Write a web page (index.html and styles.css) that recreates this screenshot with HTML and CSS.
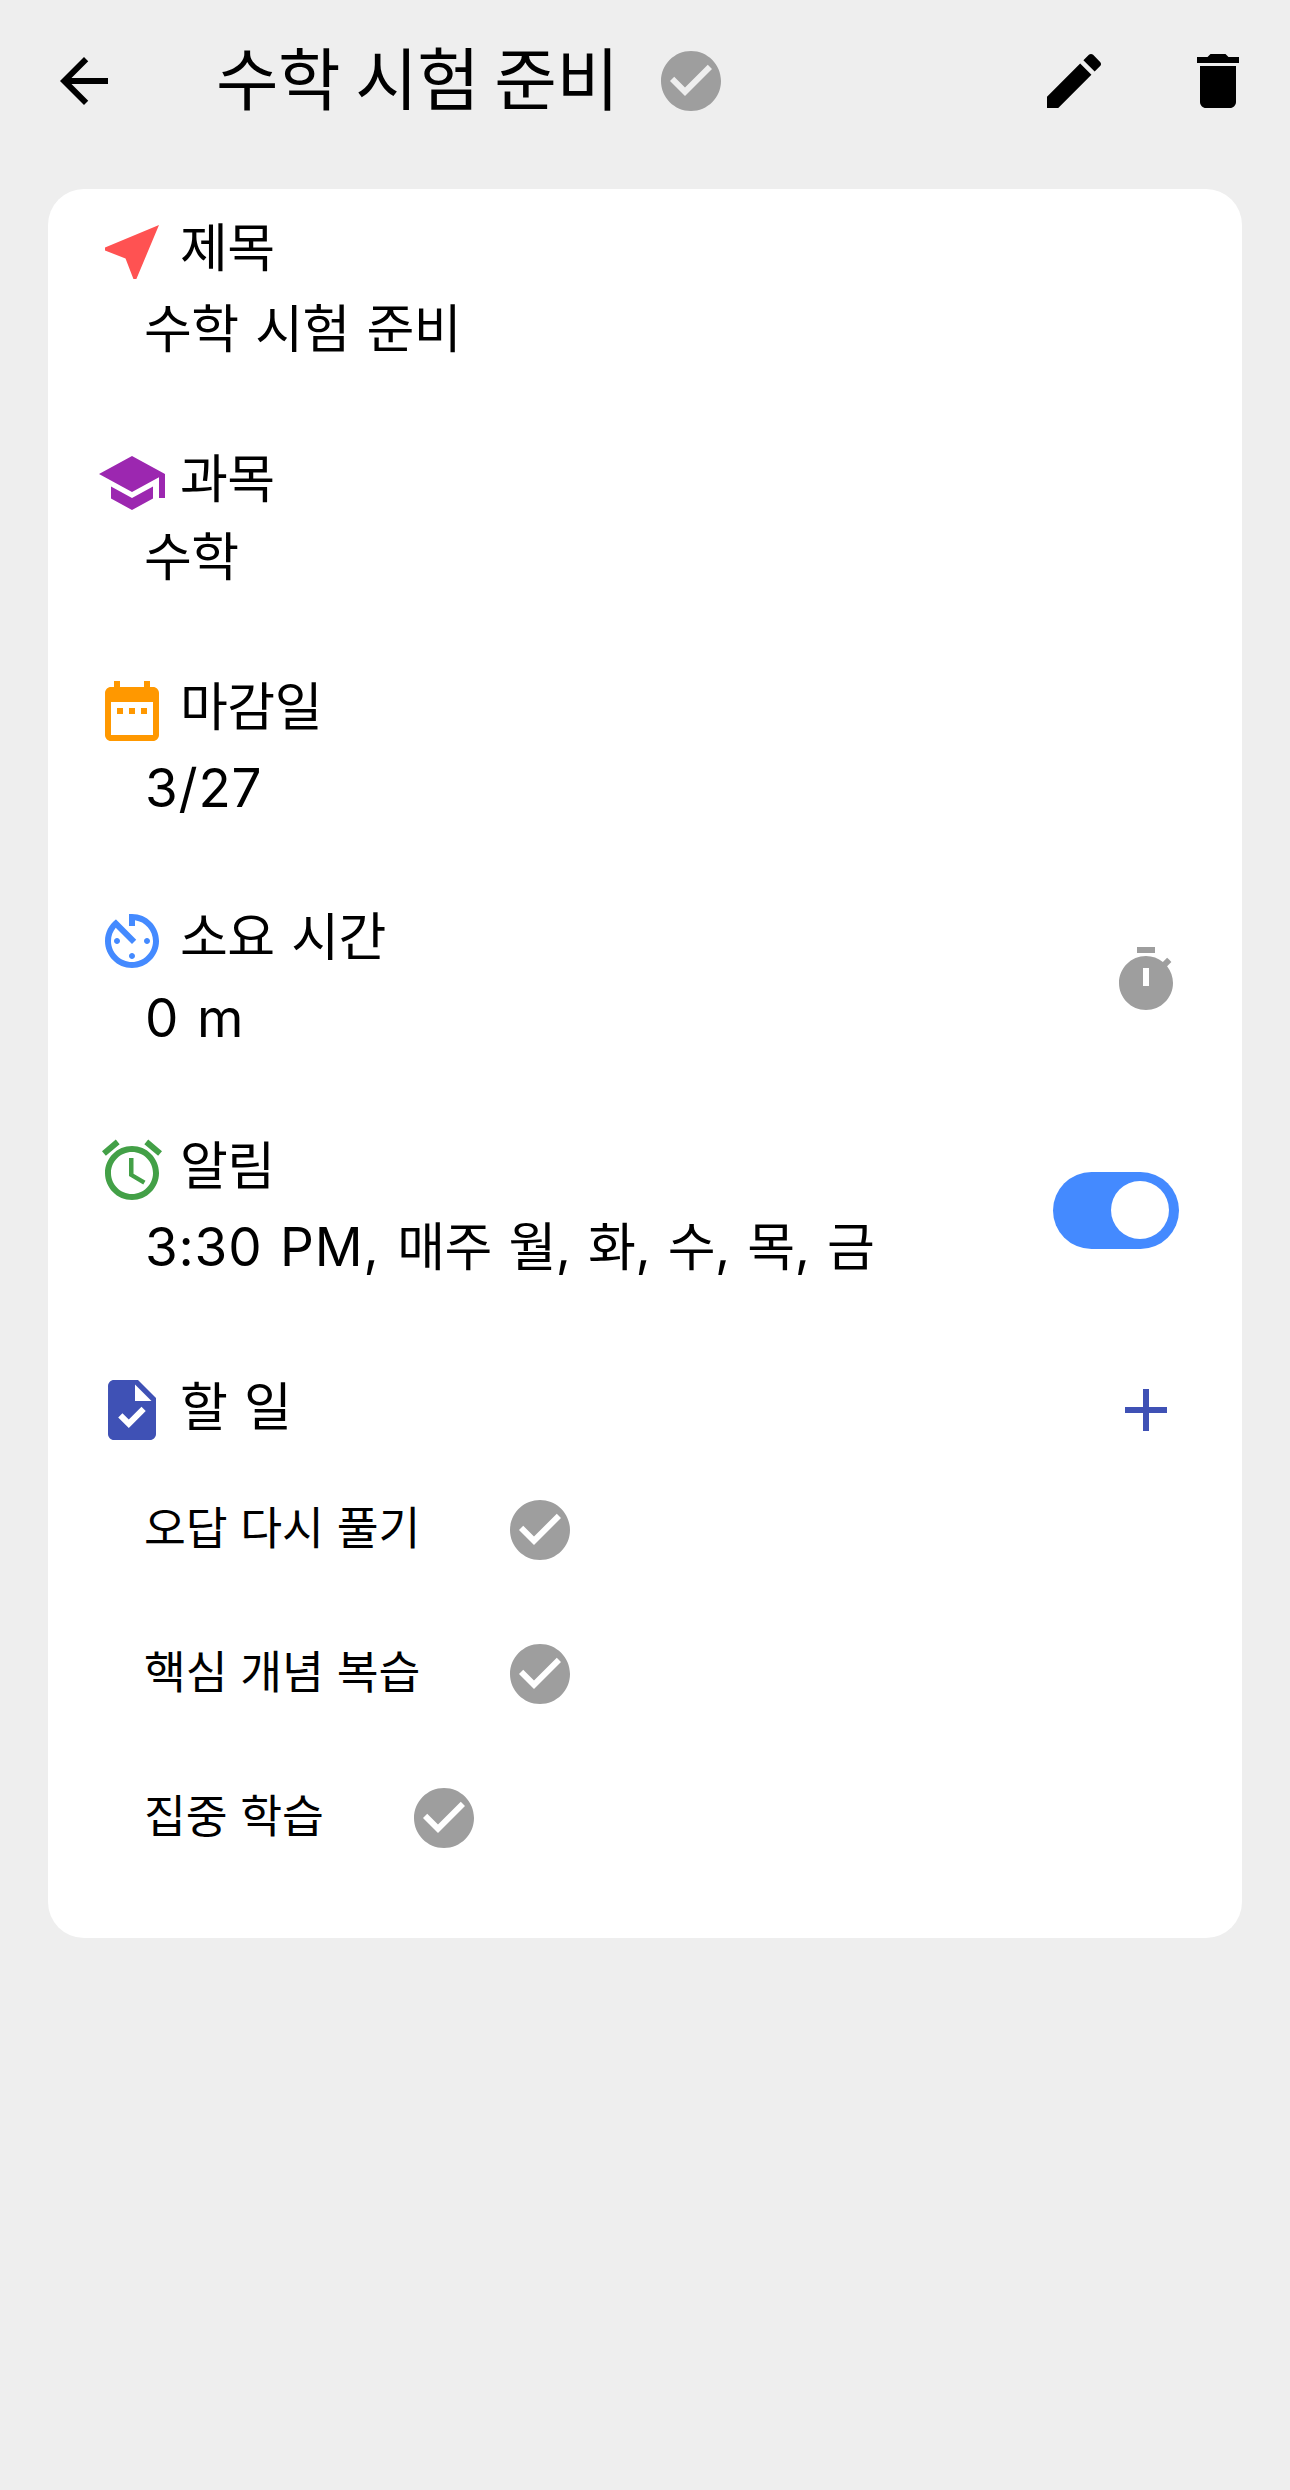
FILE: index.html
```html
<!DOCTYPE html>
<html lang="ko">
<head>
<meta charset="utf-8">
<title>수학 시험 준비</title>
<link rel="stylesheet" href="styles.css">
</head>
<body>
<header class="app-bar">
  <svg class="icon" viewBox="0 0 24 24"><path d="M20 11H7.83l5.59-5.59L12 4l-8 8 8 8 1.41-1.41L7.83 13H20v-2z"/></svg>
  <h1 class="app-title">수학 시험 준비</h1>
  <svg class="icon icon-grey" viewBox="0 0 24 24"><path d="M12 2C6.48 2 2 6.48 2 12s4.48 10 10 10 10-4.48 10-10S17.52 2 12 2zm-2 15l-5-5 1.41-1.41L10 14.17l7.59-7.59L19 8l-9 9z"/></svg>
  <div class="actions">
    <svg class="icon" viewBox="0 0 24 24"><path d="M3 17.25V21h3.75L17.81 9.94l-3.75-3.75L3 17.25zM20.71 7.04c.39-.39.39-1.02 0-1.41l-2.34-2.34c-.39-.39-1.02-.39-1.41 0l-1.83 1.83 3.75 3.75 1.83-1.83z"/></svg>
    <svg class="icon" viewBox="0 0 24 24"><path d="M6 19c0 1.1.9 2 2 2h8c1.1 0 2-.9 2-2V7H6v12zM19 4h-3.5l-1-1h-5l-1 1H5v2h14V4z"/></svg>
  </div>
</header>
<main class="card">
  <section class="field field-title">
    <div class="field-text">
      <div class="label"><svg class="icon icon-red" viewBox="0 0 24 24"><path d="M21 3L3 10.53v.98l6.84 2.65L12.48 21h.98L21 3z"/></svg><span>제목</span></div>
      <div class="value">수학 시험 준비</div>
    </div>
  </section>
  <section class="field field-subject">
    <div class="field-text">
      <div class="label"><svg class="icon icon-purple" viewBox="0 0 24 24"><path d="M5 13.18v4L12 21l7-3.82v-4L12 17l-7-3.82zM12 3L1 9l11 6 9-4.91V17h2V9L12 3z"/></svg><span>과목</span></div>
      <div class="value">수학</div>
    </div>
  </section>
  <section class="field">
    <div class="field-text">
      <div class="label"><svg class="icon icon-orange" viewBox="0 0 24 24"><path d="M9 11H7v2h2v-2zm4 0h-2v2h2v-2zm4 0h-2v2h2v-2zm2-7h-1V2h-2v2H8V2H6v2H5c-1.11 0-1.99.9-1.99 2L3 20c0 1.1.89 2 2 2h14c1.1 0 2-.9 2-2V6c0-1.1-.9-2-2-2zm0 16H5V9h14v11z"/></svg><span>마감일</span></div>
      <div class="value value-latin"><span class="latin">3/27</span></div>
    </div>
  </section>
  <section class="field field-time">
    <div class="field-text">
      <div class="label"><svg class="icon icon-blue" viewBox="0 0 24 24"><path d="M11 17c0 .55.45 1 1 1s1-.45 1-1-.45-1-1-1-1 .45-1 1zm0-14v4h2V5.08c3.39.49 6 3.39 6 6.92 0 3.87-3.13 7-7 7s-7-3.13-7-7c0-1.68.59-3.22 1.58-4.42L12 13l1.41-1.41-6.8-6.8v.02C4.42 6.45 3 9.05 3 12c0 4.97 4.02 9 9 9 4.97 0 9-4.03 9-9s-4.03-9-9-9h-1zm7 9c0-.55-.45-1-1-1s-1 .45-1 1 .45 1 1 1 1-.45 1-1zM6 12c0 .55.45 1 1 1s1-.45 1-1-.45-1-1-1-1 .45-1 1z"/></svg><span>소요 시간</span></div>
      <div class="value value-latin"><span class="latin minutes">0 m</span></div>
    </div>
    <svg class="icon icon-grey stopwatch" viewBox="0 0 24 24"><path d="M9 1h6v2H9zm10.03 6.39 1.42-1.42c-.43-.51-.9-.99-1.41-1.41l-1.42 1.42C16.07 4.74 14.12 4 12 4c-4.97 0-9 4.03-9 9s4.02 9 9 9 9-4.03 9-9c0-2.12-.74-4.07-1.97-5.61zM13 14h-2V8h2v6z"/></svg>
  </section>
  <section class="field field-alarm">
    <div class="field-text">
      <div class="label"><svg class="icon icon-green" viewBox="0 0 24 24"><path d="M22 5.72l-4.6-3.86-1.29 1.53 4.6 3.86L22 5.72zM7.88 3.39L6.6 1.86 2 5.71l1.29 1.53 4.59-3.85zM12.5 8H11v6l4.75 2.85.75-1.23-4-2.37V8zM12 4c-4.97 0-9 4.03-9 9s4.02 9 9 9c4.97 0 9-4.03 9-9s-4.03-9-9-9zm0 16c-3.87 0-7-3.13-7-7s3.13-7 7-7 7 3.13 7 7-3.13 7-7 7z"/></svg><span>알림</span></div>
      <div class="value value-latin"><span class="latin clock">3:30 PM, </span>매주 월<span class="latin">, </span>화<span class="latin">, </span>수<span class="latin">, </span>목<span class="latin">, </span>금</div>
    </div>
    <div class="switch"><div class="thumb"></div></div>
  </section>
  <section class="todo">
    <div class="todo-head">
      <div class="label"><svg class="icon icon-indigo" viewBox="0 0 24 24"><path d="M14 2H6c-1.1 0-1.99.9-1.99 2L4 20c0 1.1.89 2 1.99 2H18c1.1 0 2-.9 2-2V8l-6-6zm-3.06 16L7.4 14.46l1.41-1.41 2.12 2.12 4.24-4.24 1.41 1.41L10.94 18zM13 9V3.5L18.5 9H13z"/></svg><span>할 일</span></div>
      <svg class="icon icon-indigo" viewBox="0 0 24 24"><path d="M19 13h-6v6h-2v-6H5v-2h6V5h2v6h6v2z"/></svg>
    </div>
    <ul class="tasks">
      <li class="task"><span>오답 다시 풀기</span><svg class="icon icon-grey" viewBox="0 0 24 24"><path d="M12 2C6.48 2 2 6.48 2 12s4.48 10 10 10 10-4.48 10-10S17.52 2 12 2zm-2 15l-5-5 1.41-1.41L10 14.17l7.59-7.59L19 8l-9 9z"/></svg></li>
      <li class="task"><span>핵심 개념 복습</span><svg class="icon icon-grey" viewBox="0 0 24 24"><path d="M12 2C6.48 2 2 6.48 2 12s4.48 10 10 10 10-4.48 10-10S17.52 2 12 2zm-2 15l-5-5 1.41-1.41L10 14.17l7.59-7.59L19 8l-9 9z"/></svg></li>
      <li class="task"><span>집중 학습</span><svg class="icon icon-grey" viewBox="0 0 24 24"><path d="M12 2C6.48 2 2 6.48 2 12s4.48 10 10 10 10-4.48 10-10S17.52 2 12 2zm-2 15l-5-5 1.41-1.41L10 14.17l7.59-7.59L19 8l-9 9z"/></svg></li>
    </ul>
  </section>
</main>
</body>
</html>
```
FILE: styles.css
```css
* { box-sizing: border-box; }

body {
  margin: 0;
  min-height: 2490px;
  background: #eeeeee;
  color: #000;
  font-family: "Noto Sans CJK KR", sans-serif;
  font-weight: 400;
  white-space: nowrap;
}

.icon { width: 72px; height: 72px; flex: none; display: block; fill: currentColor; }
.icon-grey { color: #9e9e9e; }
.icon-red { color: #ff5252; }
.icon-purple { color: #9c27b0; }
.icon-orange { color: #ff9800; }
.icon-blue { color: #448aff; }
.icon-green { color: #43a047; }
.icon-indigo { color: #3f51b5; }

.app-bar {
  display: flex;
  align-items: center;
  height: 162px;
  padding: 0 36px 0 48px;
}

.app-title {
  width: 439px;
  margin: 0 0 0 96px;
  padding-bottom: 11px;
  font-size: 68px;
  line-height: 90px;
  font-weight: 400;
  letter-spacing: -0.5px;
  word-spacing: -3.5px;
}

.actions { display: flex; gap: 72px; margin-left: auto; }

.card {
  width: 1194px;
  height: 1749px;
  margin: 27px 48px 0;
  padding: 27px 60px 48px 48px;
  border-radius: 36px;
  background: #fff;
}

.field {
  display: flex;
  justify-content: space-between;
  align-items: center;
  height: 152px;
  margin-bottom: 78px;
}
.field-title { margin-bottom: 79px; }
.field-subject { margin-bottom: 76px; }
.field-time { margin-bottom: 77px; }
.field-alarm { margin-bottom: 88px; }

.label {
  display: flex;
  align-items: center;
  gap: 12px;
  height: 72px;
  font-size: 52px;
  line-height: 72px;
  letter-spacing: -0.5px;
  word-spacing: 2.5px;
}
.label span { padding-bottom: 15px; }
.todo-head .label span { padding-bottom: 12px; }

.value {
  height: 80px;
  padding-left: 48px;
  font-size: 52px;
  line-height: 76px;
  letter-spacing: -0.5px;
  word-spacing: 2.5px;
}
.value-latin { padding-left: 49px; }
.field-subject .value { line-height: 70px; }
.latin {
  font-family: Inter, sans-serif;
  font-size: 53px;
  letter-spacing: 0.8px;
  word-spacing: 0.5px;
  white-space: pre;
}
.clock, .minutes { word-spacing: 2px; }

.stopwatch { margin-bottom: 2px; }

.switch {
  display: flex;
  justify-content: flex-end;
  width: 125.5px;
  height: 77px;
  margin-right: 3.3px;
  padding: 9.5px;
  border-radius: 39px;
  background: #448aff;
}
.thumb { width: 58px; height: 58px; border-radius: 50%; background: #fff; }

.todo-head { display: flex; justify-content: space-between; }
.tasks { list-style: none; margin: 12px 0 0; padding: 0 0 0 48px; }
.task {
  display: flex;
  align-items: center;
  gap: 84px;
  height: 144px;
  font-size: 45.5px;
  line-height: 72px;
  letter-spacing: -0.2px;
  word-spacing: 0.5px;
}
.task span { padding-bottom: 10px; }
```
